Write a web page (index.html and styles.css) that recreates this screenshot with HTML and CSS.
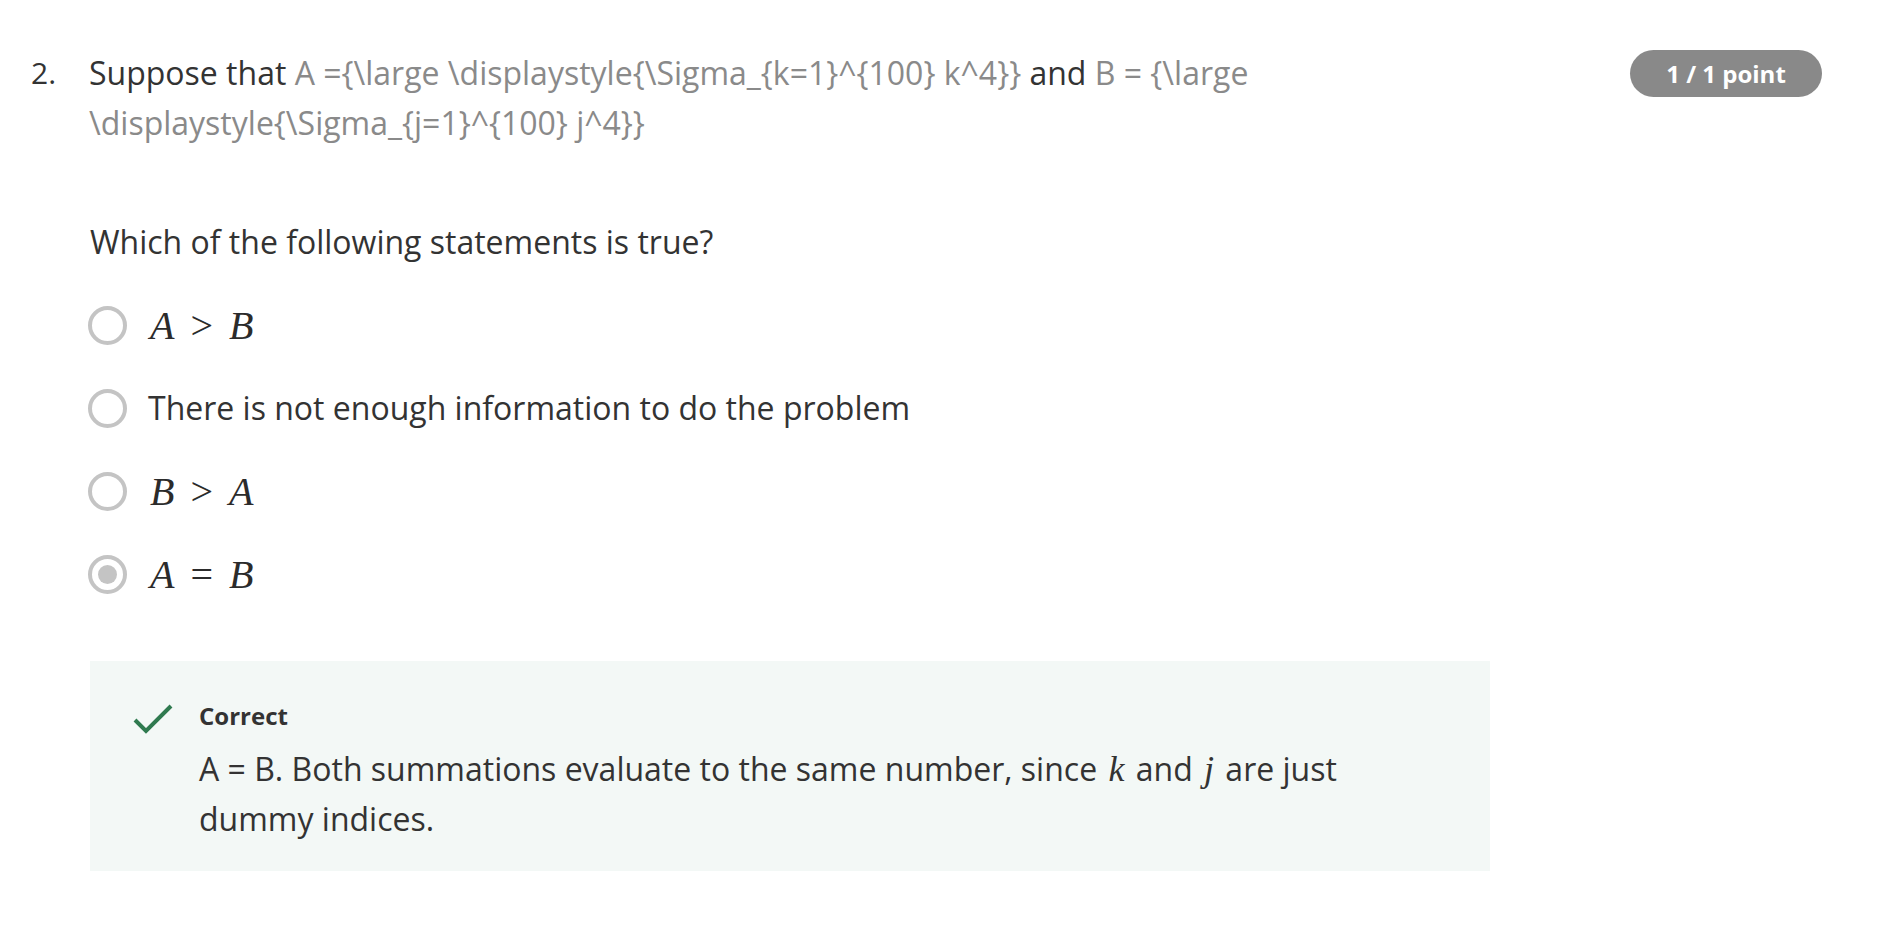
FILE: index.html
```html
<!DOCTYPE html>
<html lang="en">
<head>
<meta charset="utf-8">
<title>Quiz question 2</title>
<link rel="stylesheet" href="styles.css">
</head>
<body>
<div class="question">
  <div class="q-head">
    <div class="q-num">2.</div>
    <div class="q-body">
      <p class="q-text">Suppose that <span class="tex">A ={\large \displaystyle{\Sigma_{k=1}^{100} k^4}}</span> and <span class="tex">B = {\large \displaystyle{\Sigma_{j=1}^{100} j^4}}</span></p>
    </div>
    <div class="badge">1 / 1 point</div>
  </div>

  <div class="q-content">
    <p class="prompt">Which of the following statements is true?</p>

    <div class="options">
      <label class="option">
        <span class="radio"></span>
        <span class="math"><i>A</i><span class="rel">&gt;</span><i>B</i></span>
      </label>
      <label class="option">
        <span class="radio"></span>
        <span class="opt-text">There is not enough information to do the problem</span>
      </label>
      <label class="option">
        <span class="radio"></span>
        <span class="math"><i>B</i><span class="rel">&gt;</span><i>A</i></span>
      </label>
      <label class="option">
        <span class="radio checked"></span>
        <span class="math"><i>A</i><span class="rel">=</span><i>B</i></span>
      </label>
    </div>

    <div class="feedback">
      <svg class="check" width="40" height="32" viewBox="0 0 40 32" aria-hidden="true">
        <path d="M2 17 L13 28 L38 3" fill="none" stroke="#2f7a4f" stroke-width="4"/>
      </svg>
      <div class="fb-body">
        <div class="fb-title">Correct</div>
        <p class="fb-text">A = B. Both summations evaluate to the same number, since <i class="m">k</i> and <i class="m">j</i> are just dummy indices.</p>
      </div>
    </div>
  </div>
</div>
</body>
</html>
```

FILE: styles.css
```css
html, body {
  margin: 0;
  padding: 0;
  background: #ffffff;
}

body {
  font-family: "Open Sans", "Noto Sans", sans-serif;
  color: #333333;
  font-size: 32px;
}

.question {
  padding: 48px 64px 0 32px;
}

.q-head {
  display: flex;
  align-items: flex-start;
}

.q-num {
  width: 58px;
  flex: none;
  font-size: 30px;
  line-height: 50px;
  margin-left: -1px;
}

.q-body {
  flex: 1;
  max-width: 1400px;
}

.q-text {
  margin: 0;
  line-height: 50px;
}

.tex {
  color: #8a8a8a;
}

.badge {
  margin-left: auto;
  margin-top: 2px;
  flex: none;
  width: 192px;
  height: 47px;
  border-radius: 24px;
  background: #898989;
  color: #ffffff;
  font-weight: 700;
  font-size: 24px;
  display: flex;
  align-items: center;
  justify-content: center;
}

.q-content {
  padding-left: 58px;
  width: 1400px;
}

.prompt {
  margin: 69px 0 0 0;
  line-height: 50px;
}

.options {
  display: flex;
  flex-direction: column;
  gap: 33px;
  margin-top: 33px;
}

.option {
  display: flex;
  align-items: center;
  height: 50px;
}

.radio {
  flex: none;
  box-sizing: border-box;
  width: 39px;
  height: 39px;
  border-radius: 50%;
  border: 4px solid #c4c4c4;
  margin-left: -2px;
  margin-right: 21px;
  display: flex;
  align-items: center;
  justify-content: center;
}

.radio.checked::after {
  content: "";
  width: 19px;
  height: 19px;
  border-radius: 50%;
  background: #c4c4c4;
}

.opt-text {
  line-height: 50px;
}

.math {
  font-family: "Liberation Serif", "DejaVu Serif", serif;
  font-size: 40px;
  color: #2b2b2b;
  display: flex;
  align-items: baseline;
  padding-left: 2px;
}

.math i {
  font-style: italic;
}

.rel {
  margin: 0 16px;
}

.feedback {
  margin-top: 62px;
  background: #f3f8f6;
  display: flex;
  align-items: flex-start;
  padding: 40px 48px 27px 43px;
}

.check {
  flex: none;
  margin-top: 2px;
  margin-right: 26px;
}

.fb-body {
  max-width: 1160px;
}

.fb-title {
  font-size: 24px;
  font-weight: 700;
  line-height: 30px;
  color: #333333;
}

.fb-text {
  margin: 13px 0 0 0;
  line-height: 50px;
}

.m {
  font-family: "Liberation Serif", "DejaVu Serif", serif;
  font-size: 36px;
  font-style: italic;
  margin: 0 3px;
}
```
